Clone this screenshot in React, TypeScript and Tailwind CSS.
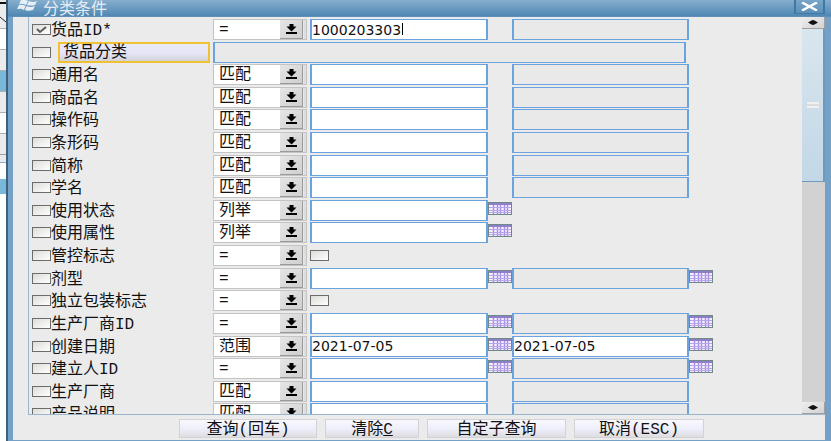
import { useState } from "react";

type Row = {
  name: string;
  op: string;
  kind?: "text" | "flag";
  second?: boolean;
  secondActive?: boolean;
  picker?: boolean;
  value?: string;
  secondValue?: string;
  caret?: boolean;
  checked?: boolean;
};

const firstRow: Row = { name: "货品ID*", op: "=", second: true, value: "1000203303", caret: true, checked: true };

const rows: Row[] = [
  { name: "通用名", op: "匹配", second: true },
  { name: "商品名", op: "匹配", second: true },
  { name: "操作码", op: "匹配", second: true },
  { name: "条形码", op: "匹配", second: true },
  { name: "简称", op: "匹配", second: true },
  { name: "学名", op: "匹配", second: true },
  { name: "使用状态", op: "列举", picker: true },
  { name: "使用属性", op: "列举", picker: true },
  { name: "管控标志", op: "=", kind: "flag" },
  { name: "剂型", op: "=", second: true, picker: true },
  { name: "独立包装标志", op: "=", kind: "flag" },
  { name: "生产厂商ID", op: "=", second: true, picker: true },
  { name: "创建日期", op: "范围", second: true, secondActive: true, picker: true, value: "2021-07-05", secondValue: "2021-07-05" },
  { name: "建立人ID", op: "=", second: true, picker: true },
  { name: "生产厂商", op: "匹配", second: true },
  { name: "产品说明", op: "匹配", second: true },
];

const operators = ["=", "匹配", "列举", "范围"];

const rowGrid = "grid grid-cols-[181px_97px_178fr_24px_177fr_24px_89fr] items-start";
const fieldBox =
  "block h-[21px] w-full min-w-0 rounded-none border border-x-2 border-[#6ba3e0] px-0 font-['DejaVu_Sans',sans-serif] text-sm leading-none text-[#111] outline-none";

function Tick({ id, label, checked = false }: { id: string; label?: string; checked?: boolean }) {
  const [on, setOn] = useState(checked);
  return (
    <span className="relative block h-[11px] w-[19px] shrink-0">
      <input
        id={id}
        type="checkbox"
        aria-label={label}
        checked={on}
        onChange={() => setOn(!on)}
        className="block h-[11px] w-[19px] appearance-none border border-[#6c6c6a] bg-linear-to-br from-[#dcdcd8] to-white"
      />
      {on && (
        <svg viewBox="0 0 19 11" className="pointer-events-none absolute inset-0" fill="none" stroke="#5c5c5a" strokeWidth="2">
          <path d="M5 5 L8 8 L14 3" />
        </svg>
      )}
    </span>
  );
}

function Operator({ name, op }: { name: string; op: string }) {
  return (
    <div className="relative h-[21px] w-[94px] border border-[#c4c4c4] bg-white">
      <select
        aria-label={name + "条件"}
        defaultValue={op}
        className="block h-[19px] w-full appearance-none pt-px pl-[5px] text-base leading-[18px] text-[#111] outline-none"
      >
        {operators.map((o) => (
          <option key={o}>{o}</option>
        ))}
      </select>
      <span className="pointer-events-none absolute inset-y-0 right-0 w-[26px] border-r-2 border-[#dedede] bg-[#e8e8e8]">
        <span className="flex h-full w-[23px] items-center justify-center border-r border-b border-[#9a9a9a] bg-linear-to-br from-[#e6e6e6] to-[#cfcfcf]">
          <svg width="11" height="10" viewBox="0 0 11 10" fill="#000">
            <path d="M3.500 0H7.500V2.500H10.500L5.500 7.500L0.500 2.500H3.500Z" />
            <path d="M0 8H11V10H0Z" />
          </svg>
        </span>
      </span>
    </div>
  );
}

function PickerButton({ label }: { label: string }) {
  return (
    <button type="button" aria-label={label} className="block h-[13px] w-6">
      <svg viewBox="0 0 24 13" className="block h-full w-full">
        <rect x="0.500" y="0.500" width="23" height="12" fill="#f4f0ff" stroke="#6f8a86" />
        <rect x="1" y="1" width="22" height="2" fill="#8f7fcb" />
        <path d="M5.500 3V12M9.500 3V12M12.500 3V12M16.500 3V12M19.500 3V12" stroke="#a58be6" strokeWidth="1.400" />
        <path d="M1 5.500H23M1 8.500H23M1 10.500H23" stroke="#b7a5ea" />
      </svg>
    </button>
  );
}

function FilterRow({ row, index }: { row: Row; index: number }) {
  const id = "cond-" + index;
  return (
    <div className={rowGrid}>
      <div className="flex h-[21px] items-center">
        <Tick id={id} checked={row.checked} />
        <label htmlFor={id} className="whitespace-nowrap pt-[3px] text-base leading-[18px]">
          {row.name}
        </label>
      </div>
      <Operator name={row.name} op={row.op} />
      {row.kind === "flag" ? (
        <div className="flex h-[21px] items-center">
          <Tick id={id + "-flag"} label={row.name + "值"} />
        </div>
      ) : (
        <div className="relative">
          <input aria-label={row.name} defaultValue={row.value} className={fieldBox + " bg-white"} />
          {row.caret && <span className="absolute top-1 left-[92px] h-3 w-px bg-black" />}
        </div>
      )}
      <div className="pt-0.5">{row.picker && <PickerButton label={"选择" + row.name} />}</div>
      <div>
        {row.second && (
          <input
            aria-label={row.name + "至"}
            defaultValue={row.secondValue}
            disabled={!row.secondActive}
            className={fieldBox + (row.secondActive ? " bg-white" : " bg-[#e9e9e9]")}
          />
        )}
      </div>
      <div className="pt-0.5">{row.picker && row.second && <PickerButton label={"选择" + row.name + "至"} />}</div>
    </div>
  );
}

function CategoryRow() {
  return (
    <div className={rowGrid}>
      <div className="flex h-[21px] items-center">
        <Tick id="cond-category" label="货品分类" />
        <button
          type="button"
          className="ml-[7px] h-[21px] w-[152px] border-2 border-[#efc133] bg-linear-to-b from-[#e9e9f8] via-[#e6e6f8] to-[#d2d2d8] pt-px pl-[3px] text-left text-base leading-4"
        >
          货品分类
        </button>
      </div>
      <div className="col-span-4 pr-[3px]">
        <input aria-label="货品分类值" disabled className={fieldBox + " bg-[#e9e9e9]"} />
      </div>
    </div>
  );
}

function ScrollArrow({ label }: { label: string }) {
  return (
    <button
      type="button"
      aria-label={label}
      className="flex h-3 shrink-0 items-center justify-center border-r border-b border-[#a0a0a0] bg-linear-to-br from-[#eeeeee] to-[#d2d2d2]"
    >
      <svg width="10" height="5" viewBox="0 0 10 5" fill="#111">
        <path d="M0 2.500L3.500 0.500L5 0L6.500 0.500L10 2.500L6.500 4.500L5 5L3.500 4.500Z" />
      </svg>
    </button>
  );
}

function PageBehind() {
  return (
    <div className="flex w-[6px] shrink-0 flex-col bg-white">
      <div className="h-1 border-b-2 border-[#111] bg-[#e8e8e8]" />
      <div className="h-[25px] border-b border-[#b0b0b0] bg-[#ececec] pt-3">
        <svg width="6" height="7" viewBox="0 0 6 7" fill="none" stroke="#222">
          <path d="M0 1L6 6" />
        </svg>
      </div>
      <div className="h-[21px] border-b border-[#b0b0b0]" />
      <div className="h-[21px] border-b border-[#b0b0b0] bg-[#ebebeb]" />
      <div className="h-[21px] border-b border-[#b0b0b0] bg-[#79b9d8]" />
      <div className="h-[21px] border-b border-[#b0b0b0] bg-[#ebebeb]" />
      <div className="h-[21px] border-b border-[#b0b0b0]" />
      <div className="h-[21px] border-b border-[#a0a0a0] bg-[#ebebeb]" />
      <div className="h-2 border-b border-[#8fb0cc] bg-[#ebebeb]" />
      <div className="h-4" />
      <div className="h-[15px] bg-[#79b9d8]" />
    </div>
  );
}

const footerButton =
  "h-[19px] border border-[#d3d3d6] bg-linear-to-b from-[#f8f8fd] via-[#efeffc] to-[#dddde0] pt-0.5 text-base leading-none whitespace-nowrap";

export default function App() {
  return (
    <div className="flex h-screen w-full overflow-hidden bg-[#ebebeb] font-['Liberation_Mono','Noto_Sans_CJK_SC',monospace] text-[#111]">
      <PageBehind />
      <section className="flex min-w-0 flex-1 flex-col border-l-2 border-[#3c6080] bg-[#75a1c6]">
        <header className="flex h-[17px] shrink-0 items-start border-b border-[#5f8fb8] bg-linear-to-b from-[#86aecd] to-[#4f88b4] pr-[6px] pl-[9px]">
          <svg width="21" height="11" viewBox="0 0 21 11" fill="#e6eef6">
            <path d="M4 0Q8 -1 11 1L9 5Q6 3 2 4Z" />
            <path d="M12 1Q16 3 20 1L18 5Q14 6 10 5Z" />
            <path d="M2 5Q6 4 8.500 6L7 10Q4 8 0 9Z" />
            <path d="M9.500 6Q13 8 18 6L16 10Q11 11.500 8 10Z" />
          </svg>
          <h1 className="ml-[5px] flex-1 pt-0.5 text-base leading-none text-[#e4edf5]">分类条件</h1>
          <button
            type="button"
            aria-label="关闭"
            className="flex h-[14px] w-[31px] items-center justify-center border-x-2 border-b border-[#3f77a5] bg-linear-to-b from-[#79a6c9] to-[#5c90ba]"
          >
            <svg width="17" height="9" viewBox="0 0 17 9" fill="none" stroke="#fff" strokeWidth="2.500">
              <path d="M1 0.500L16 8.500M16 0.500L1 8.500" />
            </svg>
          </button>
        </header>

        <div className="mr-[6px] mb-px ml-[5px] flex min-h-0 flex-1 flex-col bg-[#ebebeb]">
          <main className="ml-[15px] flex min-h-0 flex-1 border-b border-l border-[#9ab6cc]">
            <form className="min-w-0 flex-1 overflow-hidden pt-[2px] pl-[3px]" onSubmit={(e) => e.preventDefault()}>
              <div className="grid h-[407px] grid-rows-[repeat(18,minmax(0,1fr))]">
                <FilterRow row={firstRow} index={0} />
                <CategoryRow />
                {rows.map((row, i) => (
                  <FilterRow key={row.name} row={row} index={i + 1} />
                ))}
              </div>
            </form>
            <div className="flex w-[23px] shrink-0 flex-col bg-[#d2d2d2]">
              <ScrollArrow label="向上滚动" />
              <div className="flex h-[153px] items-center justify-center border-r-2 border-b border-[#6d9bc0] bg-linear-to-b from-[#d8e6ef] to-[#c3d7e6]">
                <span className="h-[6px] w-3 border-y-2 border-[#f0f0f0] bg-[#dcdcdc]" />
              </div>
              <div className="flex-1" />
              <ScrollArrow label="向下滚动" />
            </div>
          </main>

          <footer className="flex h-[25px] shrink-0 items-center justify-center gap-2 pt-px pl-[45px]">
            <button type="button" className={footerButton + " w-[138px]"}>查询(回车)</button>
            <button type="button" className={footerButton + " w-[94px]"}>
              清除<span className="underline">C</span>
            </button>
            <button type="button" className={footerButton + " w-[139px]"}>自定子查询</button>
            <button type="button" className={footerButton + " w-[130px]"}>取消(ESC)</button>
          </footer>
        </div>
      </section>
    </div>
  );
}
